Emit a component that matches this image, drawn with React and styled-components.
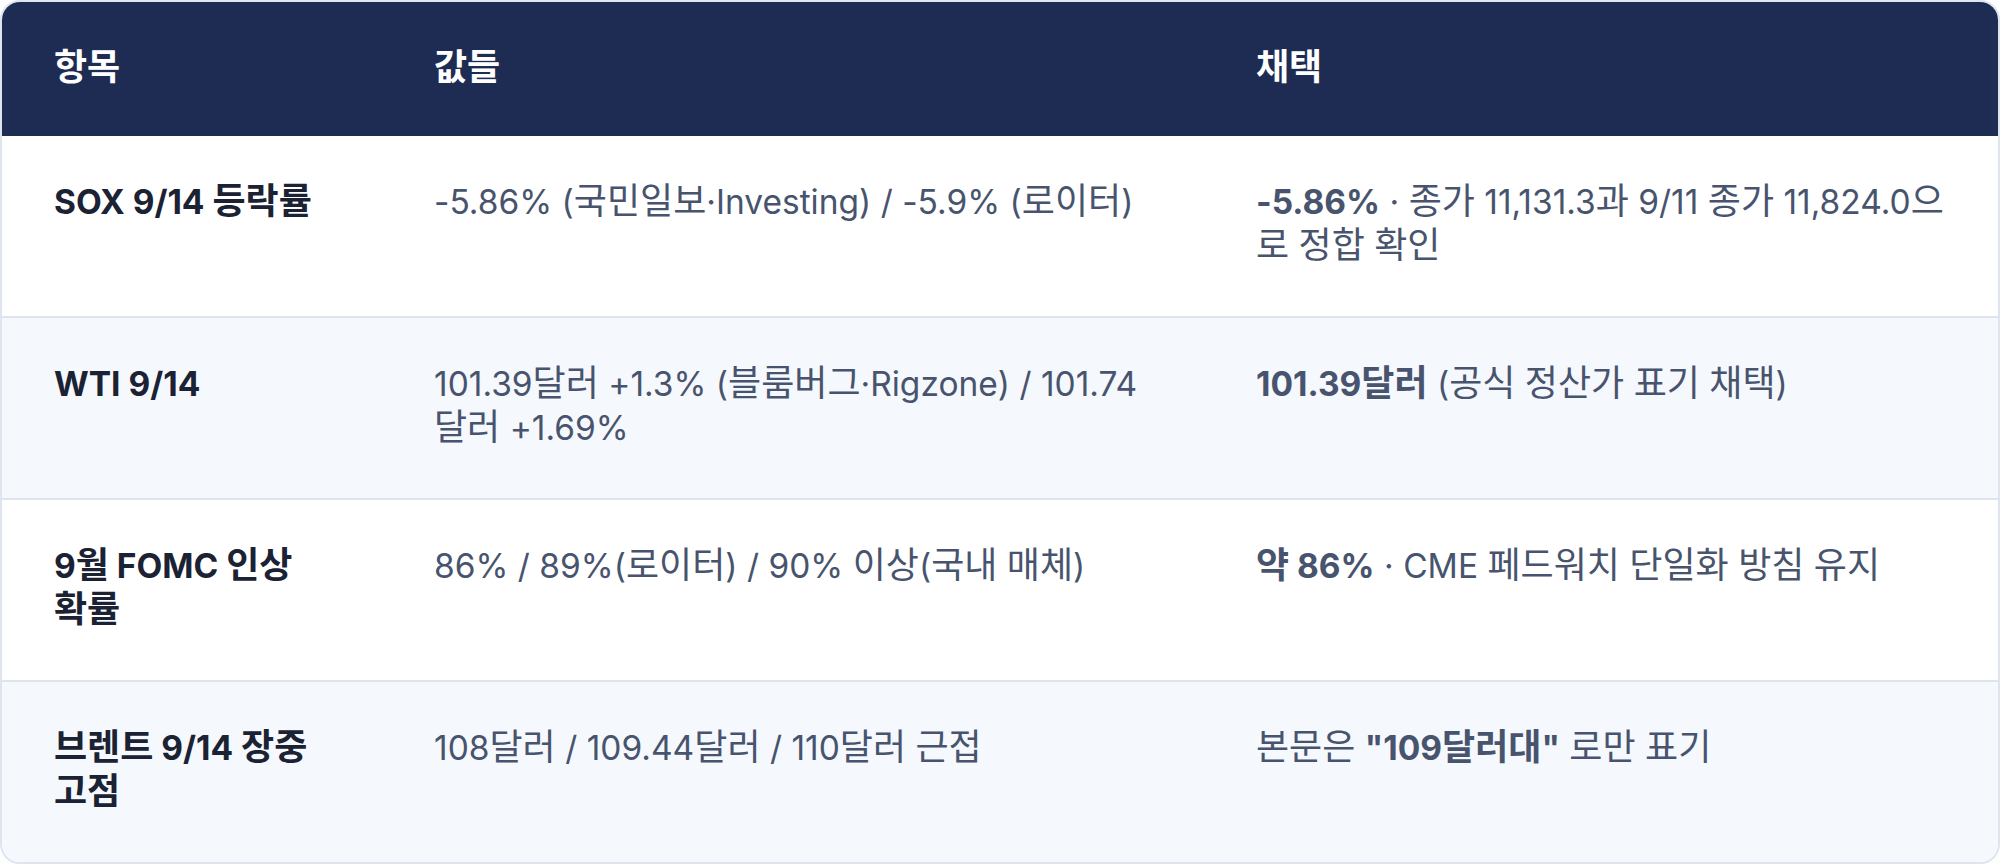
import React from 'react';
import styled, { createGlobalStyle } from 'styled-components';

const GlobalStyle = createGlobalStyle`
  html, body {
    margin: 0;
    padding: 0;
    background: #ffffff;
  }
  body {
    font-family: "Noto Sans CJK KR", Inter, sans-serif;
  }
`;

// hangul comes from the CJK face, everything else from Inter a touch smaller
const HANGUL = /([\u1100-\u11FF\u3130-\u318F\uAC00-\uD7AF]+)/;

const Latin = styled.span`
  font-family: Inter, "Noto Sans", sans-serif;
  font-size: 33.5px;
  line-height: 30px;
`;

const Strong = styled.b`
  font-weight: 700;
`;

function Mixed({ text }) {
  return text.split(HANGUL).map((part, i) => {
    if (!part) return null;
    if (i % 2 === 1) return <React.Fragment key={i}>{part}</React.Fragment>;
    return <Latin key={i}>{part}</Latin>;
  });
}

function Segments({ parts }) {
  return parts.map((p, i) =>
    typeof p === 'string' ? (
      <Mixed key={i} text={p} />
    ) : (
      <Strong key={i}>
        <Mixed text={p.b} />
      </Strong>
    )
  );
}

const rows = [
  {
    item: 'SOX 9/14 등락률',
    values: ['-5.86% (국민일보·Investing) / -5.9% (로이터)'],
    pick: [{ b: '-5.86%' }, ' · 종가 11,131.3과 9/11 종가 11,824.0으로 정합 확인'],
  },
  {
    item: 'WTI 9/14',
    values: ['101.39달러 +1.3% (블룸버그·Rigzone) / 101.74달러 +1.69%'],
    pick: [{ b: '101.39달러' }, ' (공식 정산가 표기 채택)'],
  },
  {
    item: '9월 FOMC 인상 확률',
    values: ['86% / 89%(로이터) / 90% 이상(국내 매체)'],
    pick: [{ b: '약 86%' }, ' · CME 페드워치 단일화 방침 유지'],
  },
  {
    item: '브렌트 9/14 장중 고점',
    values: ['108달러 / 109.44달러 / 110달러 근접'],
    pick: ['본문은 ', { b: '"109달러대"' }, ' 로만 표기'],
  },
];

const columns = [
  { title: '항목', width: 380 },
  { title: '값들', width: 822 },
  { title: '채택', width: 794 },
];

function App() {
  return (
    <>
      <GlobalStyle />
      <Card>
        <Table>
          <colgroup>
            {columns.map((c) => (
              <Col key={c.title} $w={c.width} />
            ))}
          </colgroup>
          <thead>
            <tr>
              {columns.map((c) => (
                <Th key={c.title}>{c.title}</Th>
              ))}
            </tr>
          </thead>
          <tbody>
            {rows.map((r, i) => (
              <Row key={i} $alt={i % 2 === 1} $last={i === rows.length - 1}>
                <ItemCell>
                  <Mixed text={r.item} />
                </ItemCell>
                <Cell>
                  <Segments parts={r.values} />
                </Cell>
                <Cell>
                  <Segments parts={r.pick} />
                </Cell>
              </Row>
            ))}
          </tbody>
        </Table>
      </Card>
    </>
  );
}

const Card = styled.div`
  border: 2px solid #dfe5ef;
  border-radius: 20px;
  overflow: hidden;
  background: #ffffff;
`;

const Table = styled.table`
  width: 100%;
  border-collapse: collapse;
  table-layout: fixed;
`;

const Col = styled.col`
  width: ${(p) => p.$w}px;
`;

const Th = styled.th`
  background: #1e2c53;
  color: #ffffff;
  text-align: left;
  font-weight: 700;
  font-size: 36px;
  line-height: 44px;
  padding: 40px 52px 50px;
`;

const Row = styled.tr`
  background: ${(p) => (p.$alt ? '#f5f8fd' : '#ffffff')};
  border-bottom: ${(p) => (p.$last ? 'none' : '2px solid #dfe5ef')};
`;

const Cell = styled.td`
  vertical-align: top;
  font-size: 36px;
  line-height: 44px;
  color: #48546e;
  padding: 40px 52px 52px;
`;

const ItemCell = styled(Cell)`
  color: #1a2233;
  font-weight: 700;
`;

export default App;
